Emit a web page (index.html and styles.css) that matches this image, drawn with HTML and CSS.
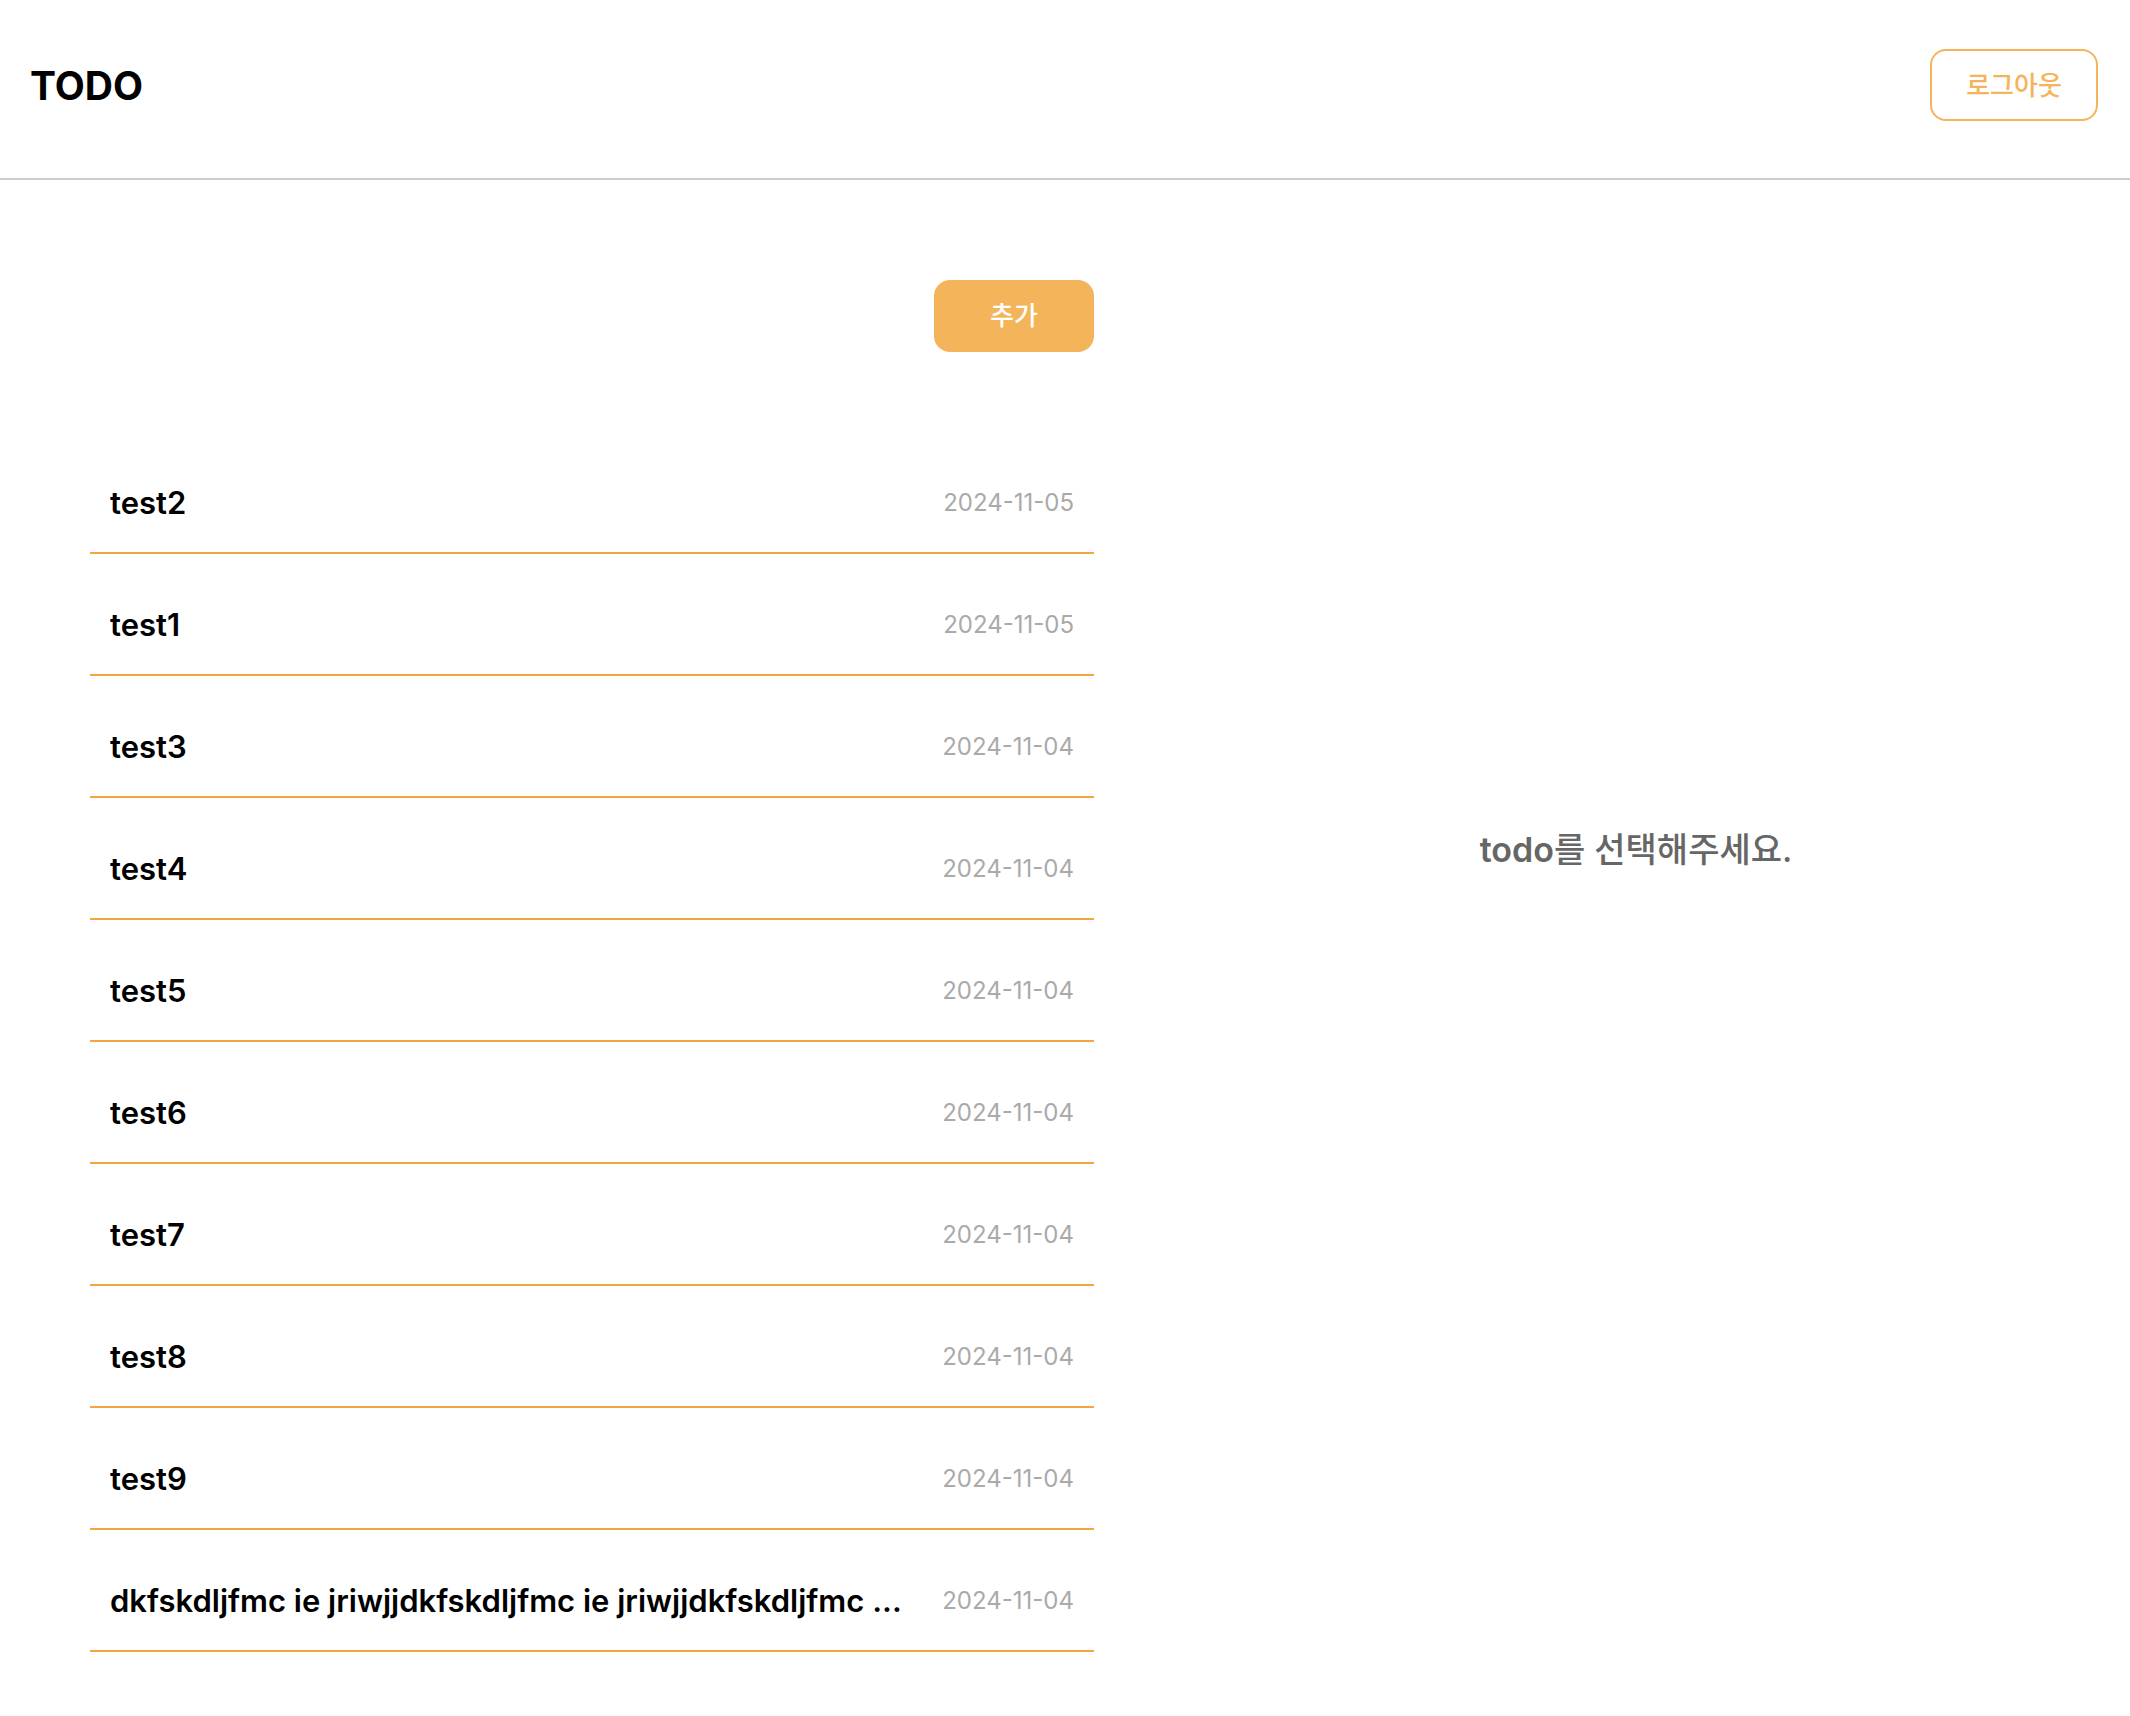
FILE: index.html
```html
<!DOCTYPE html>
<html lang="ko">
<head>
<meta charset="utf-8">
<title>TODO</title>
<link rel="stylesheet" href="styles.css">
</head>
<body>
<header class="header">
  <h1 class="logo">TODO</h1>
  <button class="button button-outline" type="button">로그아웃</button>
</header>
<main class="main">
  <section class="list-panel">
    <button class="button button-filled" type="button">추가</button>
    <ul class="todo-list">
      <li class="todo"><span class="title">test2</span><time class="date">2024-11-05</time></li>
      <li class="todo"><span class="title">test1</span><time class="date">2024-11-05</time></li>
      <li class="todo"><span class="title">test3</span><time class="date">2024-11-04</time></li>
      <li class="todo"><span class="title">test4</span><time class="date">2024-11-04</time></li>
      <li class="todo"><span class="title">test5</span><time class="date">2024-11-04</time></li>
      <li class="todo"><span class="title">test6</span><time class="date">2024-11-04</time></li>
      <li class="todo"><span class="title">test7</span><time class="date">2024-11-04</time></li>
      <li class="todo"><span class="title">test8</span><time class="date">2024-11-04</time></li>
      <li class="todo"><span class="title">test9</span><time class="date">2024-11-04</time></li>
      <li class="todo"><span class="title">dkfskdljfmc ie jriwjjdkfskdljfmc ie jriwjjdkfskdljfmc ...</span><time class="date">2024-11-04</time></li>
    </ul>
  </section>
  <section class="detail-panel">
    <p class="empty"><strong class="empty-key">todo</strong>를 선택해주세요.</p>
  </section>
</main>
</body>
</html>
```
FILE: styles.css
```css
* {
  box-sizing: border-box;
}

body {
  margin: 0;
  background: #fff;
  color: #000;
  font-family: Inter, "Noto Sans CJK KR", sans-serif;
}

.header {
  display: flex;
  align-items: center;
  justify-content: space-between;
  height: 180px;
  padding: 0 32px 8px 30px;
  border-bottom: 2px solid #ccc;
}

.logo {
  margin: 0;
  padding-top: 2px;
  font-size: 39px;
  line-height: 48px;
  font-weight: 700;
}

.button {
  height: 72px;
  padding: 0;
  border-radius: 16px;
  font: 500 26px/32px Inter, "Noto Sans CJK KR", sans-serif;
}

.button-outline {
  width: 168px;
  padding-top: 2px;
  border: 2px solid #f4b459;
  background: #fff;
  color: #f4b459;
}

.button-filled {
  width: 160px;
  border: 0;
  background: #f4b459;
  color: #fff;
}

.main {
  display: grid;
  grid-template-columns: minmax(0, 1004fr) minmax(0, 988fr);
  column-gap: 48px;
  padding: 100px 0 64px 90px;
}

.list-panel {
  display: flex;
  flex-direction: column;
  align-items: flex-end;
  gap: 80px;
}

.todo-list {
  width: 100%;
  margin: 0;
  padding: 0;
  list-style: none;
}

.todo {
  display: flex;
  align-items: center;
  justify-content: space-between;
  gap: 16px;
  height: 122px;
  padding: 22px 20px 0;
  border-bottom: 2px solid #f2a641;
}

.title {
  min-width: 0;
  overflow: hidden;
  text-overflow: ellipsis;
  white-space: nowrap;
  font-size: 31px;
  line-height: 40px;
  font-weight: 600;
}

.date {
  flex: none;
  color: #aaa;
  font-size: 24px;
  line-height: 32px;
}

.detail-panel {
  padding-top: 546px;
  text-align: center;
}

.empty {
  margin: 0;
  color: #666;
  font-size: 34px;
  line-height: 48px;
  font-weight: 500;
}

.empty-key {
  font-weight: 600;
}
```
